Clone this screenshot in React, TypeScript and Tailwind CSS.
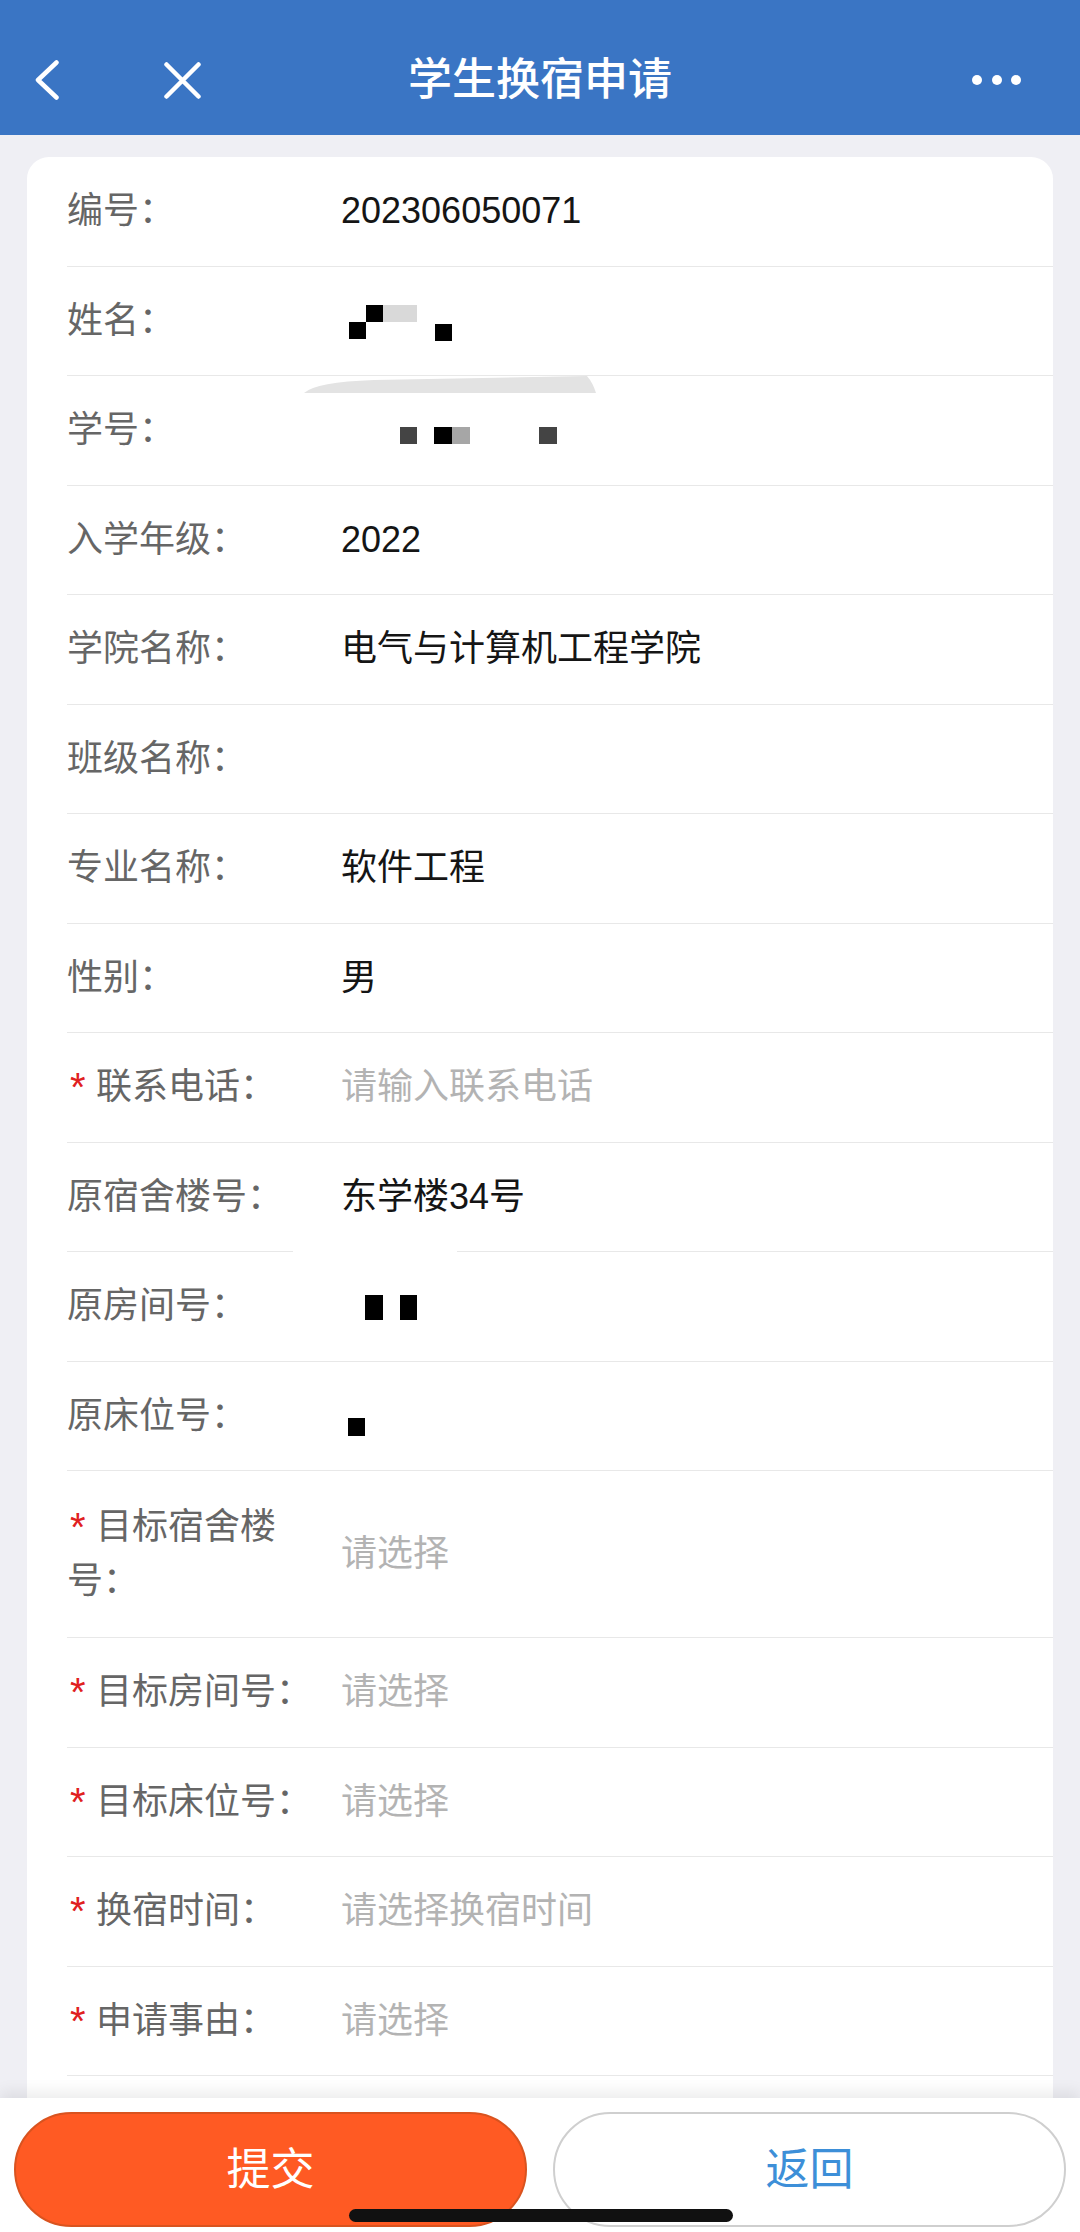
import React from 'react';

type Field = {
  label: string;
  value?: string;
  placeholder?: string;
  required?: boolean;
  tall?: boolean;
  mask?: 'name' | 'id' | 'room' | 'bed';
  gapLine?: boolean;
};

const fields: Field[] = [
  { label: '编号：', value: '202306050071' },
  { label: '姓名：', mask: 'name' },
  { label: '学号：', mask: 'id' },
  { label: '入学年级：', value: '2022' },
  { label: '学院名称：', value: '电气与计算机工程学院' },
  { label: '班级名称：' },
  { label: '专业名称：', value: '软件工程' },
  { label: '性别：', value: '男' },
  { label: '联系电话：', placeholder: '请输入联系电话', required: true },
  { label: '原宿舍楼号：', value: '东学楼34号', gapLine: true },
  { label: '原房间号：', mask: 'room' },
  { label: '原床位号：', mask: 'bed' },
  { label: '目标宿舍楼号：', placeholder: '请选择', required: true, tall: true },
  { label: '目标房间号：', placeholder: '请选择', required: true },
  { label: '目标床位号：', placeholder: '请选择', required: true },
  { label: '换宿时间：', placeholder: '请选择换宿时间', required: true },
  { label: '申请事由：', placeholder: '请选择', required: true },
  { label: '' },
];

// mosaic blocks left over from the redacted screenshot
function Mask({ kind }: { kind: Field['mask'] }) {
  if (kind === 'name')
    return (
      <>
        <span className="absolute left-[8px] top-[28px] h-[17px] w-[17px] bg-black" />
        <span className="absolute left-[25px] top-[11px] h-[17px] w-[17px] bg-black" />
        <span className="absolute left-[42px] top-[11px] h-[17px] w-[34px] bg-[#d9d9d9]" />
        <span className="absolute left-[94px] top-[30px] h-[17px] w-[17px] bg-black" />
      </>
    );
  if (kind === 'id')
    return (
      <>
        <span className="absolute left-[59px] top-[24px] h-[17px] w-[17px] bg-[#444]" />
        <span className="absolute left-[93px] top-[24px] h-[17px] w-[18px] bg-black" />
        <span className="absolute left-[111px] top-[24px] h-[17px] w-[18px] bg-[#a6a6a6]" />
        <span className="absolute left-[198px] top-[24px] h-[17px] w-[18px] bg-[#444]" />
      </>
    );
  if (kind === 'room')
    return (
      <>
        <span className="absolute left-[24px] top-[16px] h-[25px] w-[18px] bg-black" />
        <span className="absolute left-[59px] top-[16px] h-[25px] w-[17px] bg-black" />
      </>
    );
  if (kind === 'bed') return <span className="absolute left-[7px] top-[29px] h-[18px] w-[17px] bg-black" />;
  return null;
}

function Row({ f }: { f: Field }) {
  return (
    <div
      className={
        'relative flex items-center border-b border-[#e8e8e8] ' + (f.tall ? 'py-[28.5px]' : 'py-[27px]')
      }
    >
      <div className="w-[274px] shrink-0 pr-[24px] text-[36px] leading-[54.5px] text-[#666]">
        {f.required && (
          <span className="inline-block h-[54.5px] w-[29px] pl-[3px] align-top text-[40px] leading-[54.5px] text-[#e02020]">*</span>
        )}
        {f.label}
      </div>
      <div className="relative h-[54.5px] flex-1 text-[36px] leading-[54.5px]">
        {f.value && <span className="text-[#151515]">{f.value}</span>}
        {f.placeholder && <span className="text-[#b3b3b3]">{f.placeholder}</span>}
        <Mask kind={f.mask} />
      </div>
      {f.mask === 'id' && (
        <svg className="absolute left-[237px] top-0" width="292" height="17" viewBox="0 0 292 17">
          <path d="M0 17 Q12 6 70 4 L283 0 Q289 7 292 17 Z" fill="#e3e3e3" />
        </svg>
      )}
      {f.gapLine && <span className="absolute bottom-[-1px] left-[226px] h-[2px] w-[164px] bg-white" />}
    </div>
  );
}

export default function App() {
  return (
    <div className="relative flex h-[2232px] w-[1080px] flex-col overflow-hidden bg-[#efeff4] font-['Liberation_Sans','Noto_Sans_CJK_SC',sans-serif]">
      {/* nav bar */}
      <header className="flex h-[135px] shrink-0 items-center bg-[#3a75c4] pt-[25px]">
        <div className="flex w-[201px] items-center pl-[35px]">
          <svg width="24" height="40" viewBox="0 0 24 40" fill="none">
            <path d="M21.5 2.5 L3 20 L21.5 37.5" stroke="white" strokeWidth="4.5" strokeLinecap="round" strokeLinejoin="round" />
          </svg>
          <svg className="ml-[105px]" width="37" height="37" viewBox="0 0 37 37" fill="none">
            <path d="M2.5 2.5 L34.5 34.5 M34.5 2.5 L2.5 34.5" stroke="white" strokeWidth="4.5" strokeLinecap="round" />
          </svg>
        </div>
        <h1 className="flex-1 text-center text-[44px] font-medium leading-none text-white">学生换宿申请</h1>
        <div className="flex w-[201px] items-center justify-end gap-[9.5px] pr-[59px]">
          <span className="h-[10px] w-[10px] rounded-full bg-white" />
          <span className="h-[10px] w-[10px] rounded-full bg-white" />
          <span className="h-[10px] w-[10px] rounded-full bg-white" />
        </div>
      </header>

      {/* form card */}
      <main className="mx-[27px] mt-[22px] flex-1 rounded-t-[22px] bg-white pl-[40px]">
        {fields.map((f, i) => (
          <Row key={i} f={f} />
        ))}
      </main>

      {/* bottom action bar */}
      <footer className="absolute bottom-0 left-0 flex h-[134px] w-full gap-[26px] bg-white px-[14px] pt-[14px] shadow-[0_-6px_14px_rgba(0,0,0,0.08)]">
        <button className="h-[115px] flex-1 rounded-full border-2 border-[#d9531f] bg-[#ff5a23] text-[44px] text-white">
          提交
        </button>
        <button className="h-[115px] flex-1 rounded-full border-2 border-[#cfcfcf] bg-white text-[44px] text-[#3d8fd8]">
          返回
        </button>
      </footer>

      {/* home indicator */}
      <div className="absolute left-[349px] top-[2209px] h-[13px] w-[384px] rounded-full bg-[#111]" />
    </div>
  );
}
